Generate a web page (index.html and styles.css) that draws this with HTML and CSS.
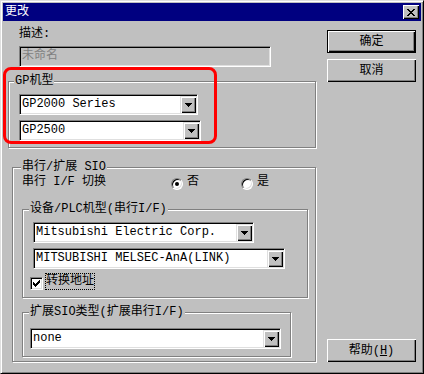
FILE: index.html
```html
<!DOCTYPE html>
<html lang="zh-CN">
<head>
    <meta charset="UTF-8">
    <title>更改</title>
    <link rel="stylesheet" href="styles.css">
</head>
<body>
    <div class="window">
        <div class="titlebar">
            <span class="title">更改</span>
            <span class="close">
                <svg width="8" height="7" viewBox="0 0 8 7" shape-rendering="crispEdges"><path d="M0 0h2v1h-2z M6 0h2v1h-2z M1 1h2v1h-2z M5 1h2v1h-2z M2 2h4v1h-4z M3 3h2v1h-2z M2 4h4v1h-4z M1 5h2v1h-2z M5 5h2v1h-2z M0 6h2v1h-2z M6 6h2v1h-2z"/></svg>
            </span>
        </div>

        <div class="content">
            <div class="left">
                <div class="label">描述:</div>
                <div class="field disabled">未命名</div>

                <div class="group gp-group">
                    <span class="legend">GP机型</span>
                    <div class="combo combo-series">
                        <span class="combo-text">GP2000 Series</span>
                        <span class="combo-btn"><svg width="7" height="4" viewBox="0 0 7 4" shape-rendering="crispEdges"><path d="M0 0h7v1h-1v1h-1v1h-1v1h-1v-1h-1v-1h-1v-1h-1z"/></svg></span>
                    </div>
                    <div class="combo combo-model">
                        <span class="combo-text">GP2500</span>
                        <span class="combo-btn"><svg width="7" height="4" viewBox="0 0 7 4" shape-rendering="crispEdges"><path d="M0 0h7v1h-1v1h-1v1h-1v1h-1v-1h-1v-1h-1v-1h-1z"/></svg></span>
                    </div>
                </div>

                <div class="group serial-group">
                    <span class="legend">串行/扩展 SIO</span>
                    <div class="switch-row">
                        <span class="switch-label">串行 I/F 切换</span>
                        <span class="option"><span class="radio on"></span>否</span>
                        <span class="option"><span class="radio"></span>是</span>
                    </div>

                    <div class="group plc-group">
                        <span class="legend">设备/PLC机型(串行I/F)</span>
                        <div class="combo combo-maker">
                            <span class="combo-text">Mitsubishi Electric Corp.</span>
                            <span class="combo-btn"><svg width="7" height="4" viewBox="0 0 7 4" shape-rendering="crispEdges"><path d="M0 0h7v1h-1v1h-1v1h-1v1h-1v-1h-1v-1h-1v-1h-1z"/></svg></span>
                        </div>
                        <div class="combo combo-driver">
                            <span class="combo-text">MITSUBISHI MELSEC-AnA(LINK)</span>
                            <span class="combo-btn"><svg width="7" height="4" viewBox="0 0 7 4" shape-rendering="crispEdges"><path d="M0 0h7v1h-1v1h-1v1h-1v1h-1v-1h-1v-1h-1v-1h-1z"/></svg></span>
                        </div>
                        <div class="check-row">
                            <span class="checkbox">
                                <svg width="7" height="7" viewBox="0 0 7 7" shape-rendering="crispEdges"><path d="M6 0h1v1h-1z M5 1h2v1h-2z M0 2h1v1h-1z M4 2h3v1h-3z M0 3h2v1h-2z M3 3h3v1h-3z M0 4h5v1h-5z M1 5h3v1h-3z M2 6h1v1h-1z"/></svg>
                            </span>
                            <span class="check-label">转换地址</span>
                        </div>
                    </div>

                    <div class="group ext-group">
                        <span class="legend">扩展SIO类型(扩展串行I/F)</span>
                        <div class="combo combo-ext">
                            <span class="combo-text">none</span>
                            <span class="combo-btn"><svg width="7" height="4" viewBox="0 0 7 4" shape-rendering="crispEdges"><path d="M0 0h7v1h-1v1h-1v1h-1v1h-1v-1h-1v-1h-1v-1h-1z"/></svg></span>
                        </div>
                    </div>
                </div>
            </div>

            <div class="right">
                <button class="btn default">确定</button>
                <button class="btn cancel">取消</button>
                <button class="btn help">帮助(<u>H</u>)</button>
            </div>
        </div>

        <!-- red annotation marking the GP model box -->
        <div class="highlight"></div>
    </div>
</body>
</html>
```

FILE: styles.css
```css
body {
    margin: 0;
    background: #c0c0c0;
    font-family: "Liberation Mono", "Noto Sans CJK SC", monospace;
    font-size: 12px;
    line-height: 12px;
    color: #000;
}

.window {
    position: relative;
    width: 424px;
    height: 374px;
    box-sizing: border-box;
    border: 1px solid;
    border-color: #dfdfdf #000 #000 #dfdfdf;
    padding: 2px;
    box-shadow: inset 1px 1px #fff, inset -1px -1px #808080;
    display: flex;
    flex-direction: column;
}

.titlebar {
    height: 18px;
    flex: none;
    background: #000080;
    color: #fff;
    display: flex;
    align-items: center;
    justify-content: space-between;
    padding: 0 2px;
}

.close {
    width: 16px;
    height: 14px;
    background: #c0c0c0;
    box-shadow: inset 1px 1px #fff, inset -1px -1px #000, inset -2px -2px #808080;
    display: flex;
    align-items: center;
    justify-content: center;
}

.content {
    flex: 1;
    display: flex;
}

.left {
    width: 309px;
    margin-left: 5px;
}

.label {
    margin: 7px 0 0 11px;
}

.field {
    width: 252px;
    height: 21px;
    margin: 6px 0 0 11px;
    box-sizing: border-box;
    border: 1px solid;
    border-color: #808080 #fff #fff #808080;
    box-shadow: inset 1px 1px #000, inset -1px -1px #dfdfdf;
    padding: 0 2px;
    line-height: 19px;
}

.field.disabled {
    color: #808080;
}

/* etched group boxes */
.group {
    box-sizing: border-box;
    border: 1px solid #808080;
    box-shadow: inset 1px 1px #fff, 1px 1px #fff;
}

.legend {
    display: block;
    width: fit-content;
    height: 12px;
    margin: -7px 0 0 5px;
    padding: 0 1px;
    background: #c0c0c0;
    white-space: pre;
}

.gp-group {
    width: 308px;
    height: 67px;
    margin-top: 14px;
}

.serial-group {
    width: 304px;
    height: 195px;
    margin: 19px 0 0 4px;
}

.serial-group > .legend {
    margin-left: 8px;
}

.plc-group {
    width: 286px;
    height: 89px;
    margin: 19px 0 0 9px;
}

.ext-group {
    width: 269px;
    height: 45px;
    margin: 14px 0 0 9px;
}

.plc-group > .legend,
.ext-group > .legend {
    margin-left: 6px;
}

/* combo boxes */
.combo {
    display: flex;
    height: 21px;
    box-sizing: border-box;
    background: #fff;
    border: 1px solid;
    border-color: #808080 #fff #fff #808080;
    box-shadow: inset 1px 1px #000, inset -1px -1px #dfdfdf;
    padding: 1px;
}

.combo-text {
    flex: 1;
    line-height: 17px;
    padding-left: 1px;
    white-space: nowrap;
    overflow: hidden;
}

.combo-btn {
    width: 16px;
    height: 17px;
    background: #c0c0c0;
    box-shadow: inset 1px 1px #dfdfdf, inset 2px 2px #fff, inset -1px -1px #000, inset -2px -2px #808080;
    display: flex;
    align-items: center;
    justify-content: center;
}

.combo-series {
    width: 179px;
    margin: 7px 0 0 10px;
}

.combo-model {
    width: 182px;
    margin: 5px 0 0 10px;
}

.combo-maker {
    width: 221px;
    margin: 7px 0 0 10px;
}

.combo-driver {
    width: 252px;
    margin: 5px 0 0 10px;
}

.combo-ext {
    width: 251px;
    margin: 10px 0 0 7px;
}

/* radio row */
.switch-row {
    display: flex;
    align-items: flex-start;
    height: 14px;
    margin: 3px 0 0 9px;
    white-space: pre;
}

.switch-label {
    width: 149px;
}

.option {
    width: 70px;
    display: flex;
    align-items: flex-start;
    gap: 4px;
}

.radio {
    width: 12px;
    height: 12px;
    margin-top: 2px;
    box-sizing: border-box;
    border-radius: 50%;
    background: #fff;
    border: 1px solid;
    border-color: #808080 #fff #fff #808080;
    box-shadow: inset 1px 1px #000, inset -1px -1px #dfdfdf;
    display: flex;
    align-items: center;
    justify-content: center;
}

.radio.on::after {
    content: "";
    width: 4px;
    height: 4px;
    border-radius: 50%;
    background: #000;
}

/* checkbox */
.check-row {
    display: flex;
    align-items: flex-start;
    gap: 2px;
    margin: 4px 0 0 7px;
}

.checkbox {
    width: 13px;
    height: 13px;
    margin-top: 4px;
    box-sizing: border-box;
    background: #fff;
    border: 1px solid;
    border-color: #808080 #fff #fff #808080;
    box-shadow: inset 1px 1px #000, inset -1px -1px #dfdfdf;
    display: flex;
    align-items: center;
    justify-content: center;
}

.check-label {
    line-height: 15px;
    padding: 1px 1px;
    outline: 1px dotted #000;
    outline-offset: -1px;
}

/* buttons */
.right {
    display: flex;
    flex-direction: column;
    margin-left: 10px;
    padding-bottom: 9px;
}

.btn {
    width: 89px;
    height: 23px;
    padding: 0;
    border: none;
    background: #c0c0c0;
    font: inherit;
    color: #000;
    box-shadow: inset 1px 1px #fff, inset -1px -1px #000, inset -2px -2px #808080;
}

.btn.default {
    margin-top: 9px;
    border: 1px solid #000;
}

.btn.cancel {
    margin-top: 6px;
}

.btn.help {
    margin-top: auto;
}

.highlight {
    position: absolute;
    left: 2px;
    top: 66px;
    width: 214px;
    height: 77px;
    box-sizing: border-box;
    border: 3px solid #f00;
    border-radius: 8px;
}
```
